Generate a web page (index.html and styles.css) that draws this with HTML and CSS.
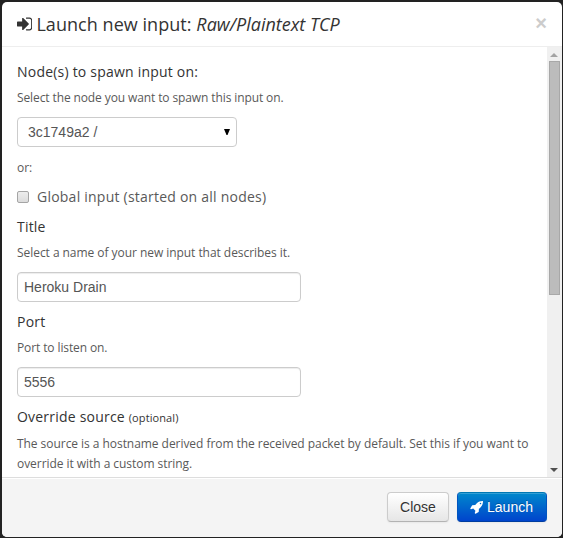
FILE: index.html
```html
<!DOCTYPE html>
<html lang="en">
<head>
<meta charset="utf-8">
<title>Launch new input</title>
<link rel="stylesheet" href="styles.css">
</head>
<body>
<div class="modal">
  <header class="modal-header">
    <h2><svg class="icon-signin" viewBox="0 0 1536 1792"><path d="M1184 896q0 26-19 45l-544 544q-19 19-45 19t-45-19-19-45v-288h-448q-26 0-45-19t-19-45v-384q0-26 19-45t45-19h448v-288q0-26 19-45t45-19 45 19l544 544q19 19 19 45zm352-352v704q0 119-84.500 203.500t-203.500 84.500h-320q-13 0-22.500-9.500t-9.500-22.500q0-4-1-20t-.5-26.500 3-23.500 10-19.500 20.500-6.500h320q66 0 113-47t47-113v-704q0-66-47-113t-113-47h-312l-11.500-1-11.500-3-8-5.500-7-9-2-13.500q0-4-1-20t-.5-26.500 3-23.500 10-19.500 20.500-6.500h320q119 0 203.500 84.500t84.500 203.500z"/></svg><span class="heading">Launch new input: <em>Raw/Plaintext TCP</em></span></h2>
    <span class="close">×</span>
  </header>
  <div class="modal-body">
    <form class="fields">
      <label>Node(s) to spawn input on:</label>
      <p class="help tight">Select the node you want to spawn this input on.</p>
      <div class="control select"><span>3c1749a2 /</span><svg class="caret" viewBox="0 0 6 6"><path d="M0 0h6L3.500 6h-1z"/></svg></div>
      <p class="help or">or:</p>
      <div class="check"><span class="box"></span><span>Global input (started on all nodes)</span></div>
      <label>Title</label>
      <p class="help">Select a name of your new input that describes it.</p>
      <div class="control">Heroku Drain</div>
      <label>Port</label>
      <p class="help tight">Port to listen on.</p>
      <div class="control">5556</div>
      <label>Override source <small>(optional)</small></label>
      <p class="help">The source is a hostname derived from the received packet by default. Set this if you want to override it with a custom string.</p>
    </form>
    <div class="scrollbar">
      <svg class="arrow up" viewBox="0 0 8 4"><path d="M4 0l4 4H0z"/></svg>
      <div class="thumb"></div>
      <svg class="arrow down" viewBox="0 0 8 4"><path d="M4 4l4-4H0z"/></svg>
    </div>
  </div>
  <footer class="modal-footer">
    <span class="btn">Close</span>
    <span class="btn primary"><svg class="icon-rocket" viewBox="0 0 1664 1664"><path d="M1440 320q0-40-28-68t-68-28-68 28-28 68 28 68 68 28 68-28 28-68zm224-288q0 249-75.500 430.500t-253.500 360.500q-81 80-195 176l-20 379q-2 16-16 26l-384 224q-7 4-16 4-12 0-23-9l-64-64q-13-14-8-32l85-276-281-281-276 85q-3 1-9 1-14 0-23-9l-64-64q-17-19-5-39l224-384q10-14 26-16l379-20q96-114 176-195 188-187 358-258t431-71q14 0 24 9.500t10 22.500z"/></svg>Launch</span>
  </footer>
</div>
</body>
</html>
```

FILE: styles.css
```css
* { box-sizing: border-box; }
body {
  margin: 0;
  height: 538px;
  padding: 2px 1px 1px 2px;
  overflow: hidden;
  background: #222;
  color: #333;
  font: 14px/20px "Open Sans", "Noto Sans", sans-serif;
}
.modal {
  display: flex;
  flex-direction: column;
  width: 560px;
  height: 535px;
  background: #fff;
  border-radius: 5px;
  overflow: hidden;
}
.modal-header {
  display: flex;
  justify-content: space-between;
  height: 45px;
  padding: 0 15px;
  border-bottom: 1px solid #eee;
}
h2 {
  display: flex;
  align-items: center;
  gap: 4px;
  margin: 0;
  font-size: 18px;
  font-weight: 400;
  line-height: 44px;
}
.heading { letter-spacing: .05px; }
.heading em { letter-spacing: 0; }
.icon-signin { width: 15.4px; height: 18px; fill: #333; }
.close {
  color: #ccc;
  font: bold 20px/43px "Liberation Sans", sans-serif;
}
.modal-body {
  display: flex;
  height: 430px;
  overflow: hidden;
}
.fields {
  flex: 1;
  padding: 15px 15px 0;
}
label { display: block; margin-bottom: 6px; letter-spacing: .21px; }
label small { font-size: 11px; letter-spacing: .1px; }
.help {
  margin: 0 0 9px;
  color: #595959;
  font-size: 12px;
  line-height: 20px;
  letter-spacing: -.05px;
}
.tight { letter-spacing: -.11px; }
.control {
  width: 284px;
  height: 30px;
  margin-bottom: 10px;
  padding: 4px 6px;
  border: 1px solid #ccc;
  border-radius: 4px;
  box-shadow: inset 0 1px 1px rgba(0, 0, 0, .075);
  color: #555;
  font: 14px/20px "Liberation Sans", sans-serif;
}
.select {
  display: flex;
  align-items: center;
  justify-content: space-between;
  width: 220px;
  margin-bottom: 11px;
  padding: 4px 6px 4px 10px;
  box-shadow: none;
}
.caret { width: 6px; height: 6px; }
.or { letter-spacing: 0; }
.check {
  display: flex;
  align-items: center;
  gap: 8px;
  height: 20px;
  margin-bottom: 10px;
  color: #595959;
  letter-spacing: .23px;
}
.box {
  width: 12px;
  height: 12px;
  border: 1px solid #a5a5a5;
  border-radius: 2px;
  background: linear-gradient(#ededed, #dcdcdc);
}
.scrollbar {
  display: flex;
  flex-direction: column;
  width: 15px;
  padding: 6px 2px 5px;
  background: #f0f0f0;
}
.arrow { width: 8px; height: 4px; margin-left: 1px; }
.up { fill: #a3a3a3; }
.down { margin-top: auto; fill: #505050; }
.thumb {
  width: 11px;
  height: 234px;
  margin-top: 4px;
  border: 1px solid #a8a8a8;
  background: #bcbcbc;
}
.modal-footer {
  display: flex;
  flex: 1;
  align-items: flex-start;
  justify-content: flex-end;
  gap: 8px;
  padding: 14px 15px;
  border-top: 1px solid #ddd;
  background: #f4f4f4;
  box-shadow: inset 0 1px 0 #fff;
}
.btn {
  display: flex;
  align-items: center;
  justify-content: center;
  width: 62px;
  height: 30px;
  border: 1px solid #ccc;
  border-bottom-color: #b3b3b3;
  border-radius: 4px;
  background: linear-gradient(#fff, #e6e6e6);
  box-shadow: inset 0 1px 0 rgba(255, 255, 255, .2), 0 1px 2px rgba(0, 0, 0, .05);
  color: #333;
  font: 14px/20px "Liberation Sans", sans-serif;
  text-shadow: 0 1px 1px rgba(255, 255, 255, .75);
}
.primary {
  gap: 4px;
  width: 90px;
  border-color: #0077b3 #0055c0 #003da0;
  background: linear-gradient(#08c, #04c);
  color: #fff;
  text-shadow: 0 -1px 0 rgba(0, 0, 0, .25);
}
.icon-rocket { width: 13px; height: 13px; margin-left: -1px; fill: #fff; }
```
